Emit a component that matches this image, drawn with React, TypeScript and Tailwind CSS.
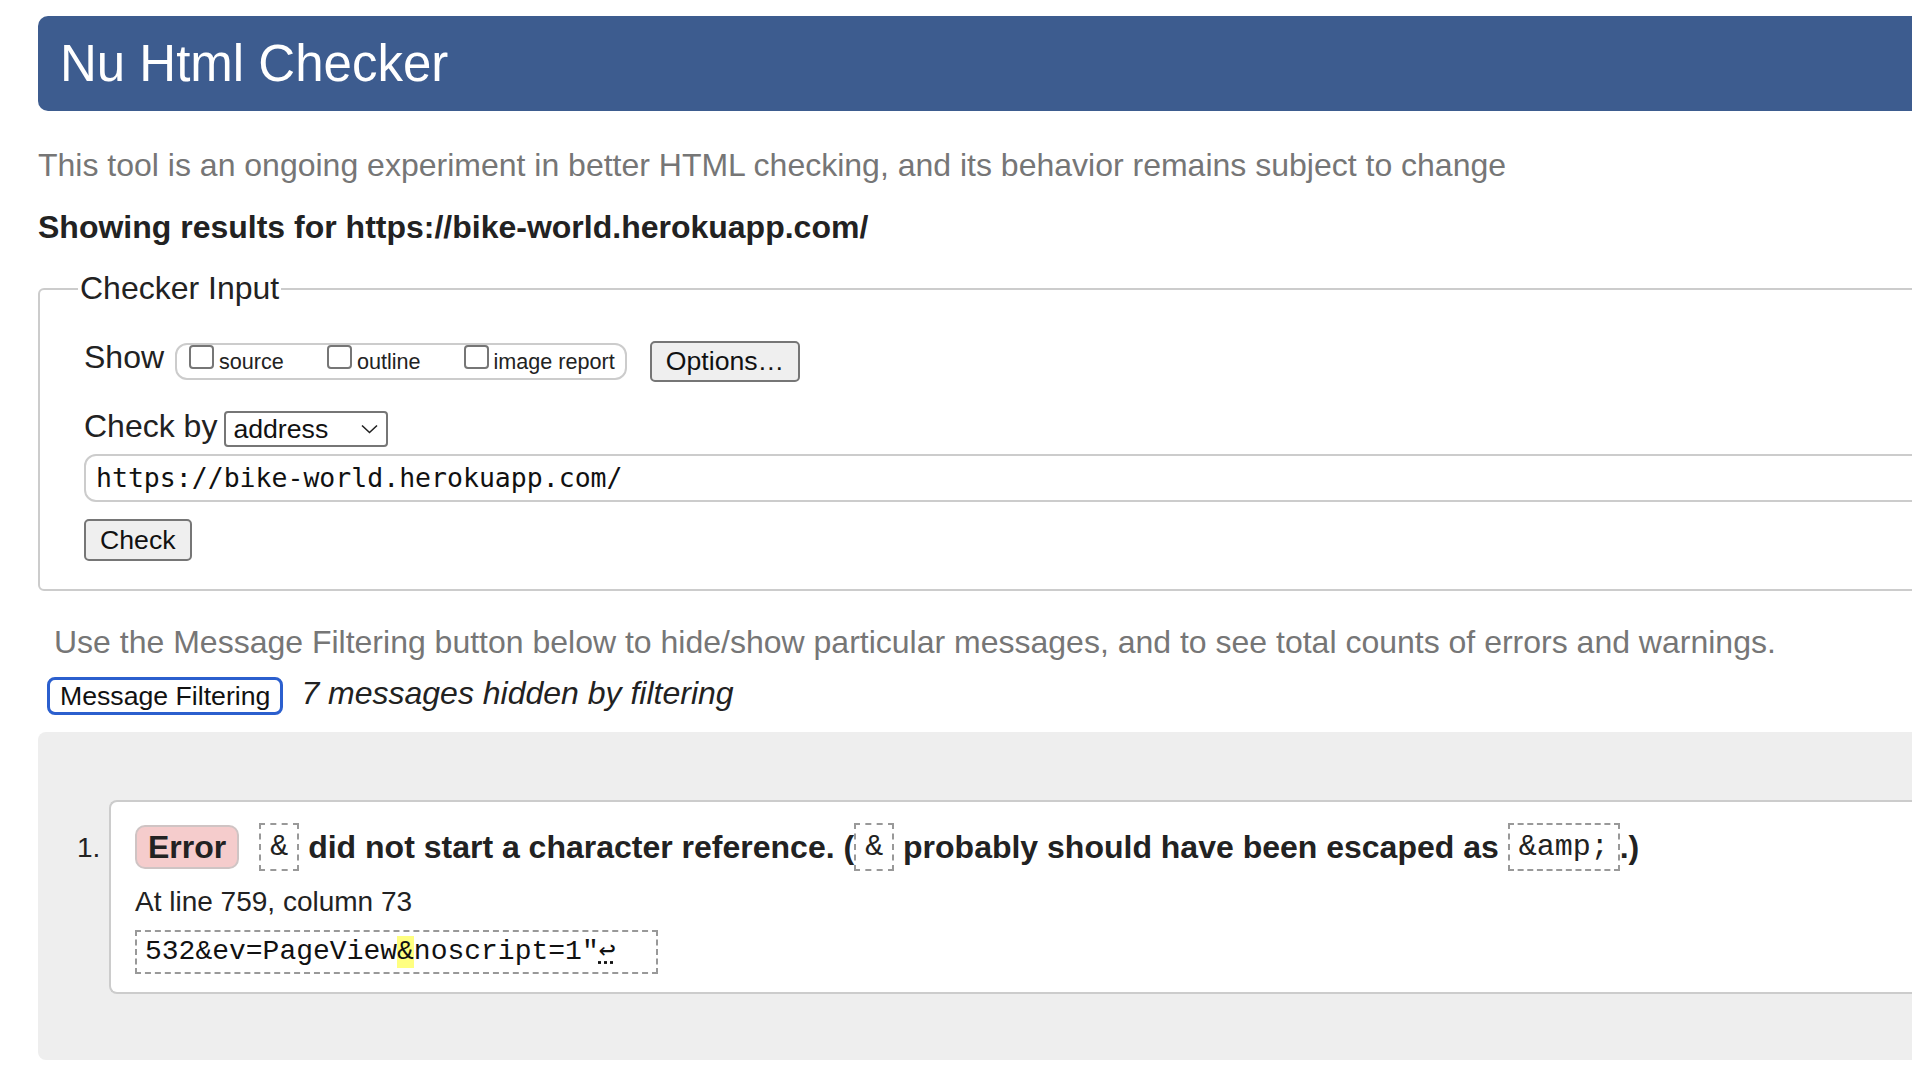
const sans = "font-['Liberation_Sans',Arial,Helvetica,sans-serif]";

function Checkbox() {
  return (
    <span className="block h-[24px] w-[25px] shrink-0 rounded-[4px] border-2 border-[#767676] bg-white" />
  );
}

function ShowOption({ label, first }: { label: string; first?: boolean }) {
  return (
    <div className={first ? "flex items-start" : "ml-[43px] flex items-start"}>
      <Checkbox />
      <span className="ml-[5px] mt-[5px] text-[21.6px] leading-[24px] text-[#222]">{label}</span>
    </div>
  );
}

function Code({ children, className = "" }: { children: React.ReactNode; className?: string }) {
  return (
    <span
      className={`flex h-[48px] shrink-0 items-center border-2 border-dashed border-[#999] px-[9px] font-['Liberation_Mono','Courier_New',monospace] text-[30px] font-normal leading-none text-[#222] ${className}`}
    >
      {children}
    </span>
  );
}

export default function App() {
  return (
    <div className={`h-[1066px] w-[1912px] overflow-hidden bg-white text-[#222] ${sans}`}>
      <div className="w-[2400px] pl-[38px] pt-[16px]">
        <header className="flex h-[95px] items-center rounded-[10px] bg-[#3d5c8f] pl-[22px]">
          <h1 className="text-[51px] leading-none text-white">Nu Html Checker</h1>
        </header>

        <p className="mt-[36px] text-[32px] leading-[37px] text-[#767676]">
          This tool is an ongoing experiment in better HTML checking, and its behavior remains subject to change
        </p>
        <p className="mt-[25px] text-[32px] font-bold leading-[37px] text-[#222]">
          Showing results for https://bike-world.herokuapp.com/
        </p>

        <fieldset className="mt-[22px] rounded-[6px] border-2 border-[#ccc] px-[38px] pb-[28px] pt-[32px]">
          <legend className="px-[2px] py-[2px] text-[32px] leading-[37px] text-[#222]">Checker Input</legend>
          <div className="pl-[6px]">
            <div className="flex h-[41px] items-start">
              <span className="mt-[-2px] text-[32px] leading-[37px]">Show</span>
              <div className="ml-[11px] mt-[2px] flex h-[37px] items-start rounded-[12px] border-2 border-[#ccc] pl-[12px] pr-[10px]">
                <ShowOption label="source" first />
                <ShowOption label="outline" />
                <ShowOption label="image report" />
              </div>
              <button className="ml-[23px] flex h-[41px] items-center rounded-[5px] border-2 border-[#767676] bg-[#efefef] px-[14px] text-[26.67px] leading-none text-[#111]">
                Options…
              </button>
            </div>

            <div className="mt-[29px] flex h-[36px] items-start">
              <span className="mt-[-3px] text-[32px] leading-[37px]">Check by</span>
              <div className="ml-[7px] flex h-[36px] w-[164px] items-center justify-between rounded-[4px] border-2 border-[#767676] bg-white pl-[7px] pr-[8px]">
                <span className="text-[26.67px] leading-[30px] text-[#111]">address</span>
                <svg width="17" height="10" viewBox="0 0 17 10" fill="none">
                  <polyline points="1,1.5 8.5,8.5 16,1.5" stroke="#222" strokeWidth="1.6" />
                </svg>
              </div>
            </div>

            <div className="mt-[7px] flex h-[48px] items-center rounded-[12px] border-2 border-[#ccc] pl-[10px]">
              <span className="font-['DejaVu_Sans_Mono',Menlo,monospace] text-[26.5px] leading-[30px] text-[#111]">
                https://bike-world.herokuapp.com/
              </span>
            </div>

            <button className="mt-[17px] flex h-[42px] items-center rounded-[5px] border-2 border-[#767676] bg-[#efefef] px-[14px] text-[26.67px] leading-none text-[#111]">
              Check
            </button>
          </div>
        </fieldset>

        <p className="ml-[16px] mt-[33px] text-[32px] leading-[37px] text-[#767676]">
          Use the Message Filtering button below to hide/show particular messages, and to see total counts of errors and warnings.
        </p>

        <div className="mt-[16px] flex h-[38px] items-center">
          <button className="ml-[9px] flex h-[38px] items-center rounded-[8px] border-[3px] border-[#2b5fce] bg-white px-[10px] text-[26.67px] leading-none text-[#111]">
            Message Filtering
          </button>
          <span className="mb-[6px] ml-[18px] text-[32px] italic leading-[37px] text-[#222]">7 messages hidden by filtering</span>
        </div>

        <div className="mt-[17px] flex rounded-[8px] bg-[#eeeeee] pb-[66px] pt-[68px]">
          <div className="w-[71px] shrink-0 pl-[39px] pt-[32px] text-[28px] leading-[32px]">1.</div>
          <div className="flex-1 rounded-l-[8px] border-2 border-r-0 border-[#ccc] bg-white pb-[18px] pl-[24px] pt-[21px]">
            <div className="flex h-[48px] items-center whitespace-pre text-[32px] font-bold">
              <span className="flex h-[44px] items-center rounded-[10px] border-2 border-[#cfc4c4] bg-[#f5cccc] px-[11px] leading-none">
                Error
              </span>
              <Code className="ml-[20px]">&amp;</Code>
              <span> did not start a character reference. (</span>
              <Code>&amp;</Code>
              <span> probably should have been escaped as </span>
              <Code>&amp;amp;</Code>
              <span>.)</span>
            </div>
            <p className="mt-[15px] text-[28px] leading-[32px]">At line 759, column 73</p>
            <div className="mt-[12px] flex h-[44px] w-[523px] items-center border-2 border-dashed border-[#999] pl-[8px] font-['Liberation_Mono','Courier_New',monospace] text-[28px] leading-[32px] text-[#111]">
              <span>532&amp;ev=PageView</span>
              <span className="bg-[#ffff80]">&amp;</span>
              <span>noscript=1"</span>
              <span className="underline decoration-dotted">↩</span>
            </div>
          </div>
        </div>
      </div>
    </div>
  );
}
